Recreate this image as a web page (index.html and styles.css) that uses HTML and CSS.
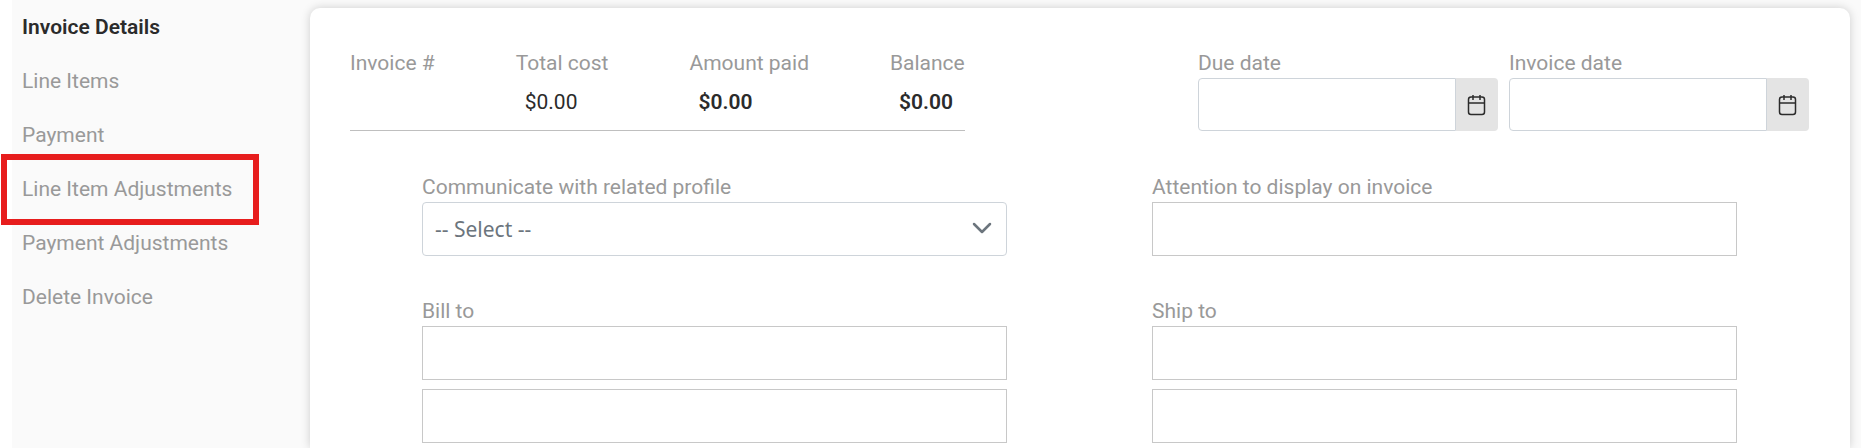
FILE: index.html
```html
<!DOCTYPE html>
<html lang="en">
  <head>
    <meta charset="utf-8">
    <title>Invoice Details</title>
    <link rel="stylesheet" href="styles.css">
  </head>
  <body>
    <div class="page">
      <nav class="sidebar">
        <a href="#details" class="active">Invoice Details</a>
        <a href="#items">Line Items</a>
        <a href="#payment">Payment</a>
        <a href="#item-adjustments" class="marked">Line Item Adjustments</a>
        <a href="#payment-adjustments">Payment Adjustments</a>
        <a href="#delete">Delete Invoice</a>
      </nav>

      <main class="card">
        <div class="summary">
          <dl class="totals">
            <div>
              <dt>Invoice #</dt>
              <dd></dd>
            </div>
            <div>
              <dt>Total cost</dt>
              <dd>$0.00</dd>
            </div>
            <div>
              <dt>Amount paid</dt>
              <dd class="strong">$0.00</dd>
            </div>
            <div>
              <dt>Balance</dt>
              <dd class="strong">$0.00</dd>
            </div>
          </dl>

          <div class="dates">
            <div class="field">
              <label for="due-date">Due date</label>
              <div class="date-input">
                <input type="text" id="due-date">
                <button type="button" aria-label="Choose due date">
                  <svg class="calendar" viewBox="0 0 20 22">
                    <rect x="1.500" y="3" width="16" height="17.500" rx="2.500" />
                    <path d="M1.500 9h16M6 1v5M13 1v5" />
                  </svg>
                </button>
              </div>
            </div>
            <div class="field">
              <label for="invoice-date">Invoice date</label>
              <div class="date-input">
                <input type="text" id="invoice-date">
                <button type="button" aria-label="Choose invoice date">
                  <svg class="calendar" viewBox="0 0 20 22">
                    <rect x="1.500" y="3" width="16" height="17.500" rx="2.500" />
                    <path d="M1.500 9h16M6 1v5M13 1v5" />
                  </svg>
                </button>
              </div>
            </div>
          </div>
        </div>

        <form class="details">
          <div class="field">
            <label for="profile">Communicate with related profile</label>
            <div class="select-box">
              <select id="profile">
                <option>-- Select --</option>
              </select>
              <svg class="arrow" viewBox="0 0 20 12">
                <path d="M2 2l8 8 8-8" />
              </svg>
            </div>
          </div>
          <div class="field">
            <label for="attention">Attention to display on invoice</label>
            <input type="text" id="attention">
          </div>
          <div class="field">
            <label for="bill-to">Bill to</label>
            <input type="text" id="bill-to">
            <input type="text" aria-label="Bill to, line 2">
          </div>
          <div class="field">
            <label for="ship-to">Ship to</label>
            <input type="text" id="ship-to">
            <input type="text" aria-label="Ship to, line 2">
          </div>
        </form>
      </main>
    </div>
  </body>
</html>
```
FILE: styles.css
```css
* {
  box-sizing: border-box;
}

body {
  margin: 0;
  padding-left: 12px;
  background-color: #fff;
  color: #2b2b2b;
  font-family: Roboto, Arial, sans-serif;
  font-size: 21px;
  line-height: 24px;
}

.page {
  display: flex;
  min-height: 100vh;
  padding: 8px 11px 0 0;
  background-color: #fafafa;
}

/* Sidebar */
.sidebar {
  display: flex;
  flex-direction: column;
  align-items: flex-start;
  gap: 30px;
  width: 298px;
  flex-shrink: 0;
  padding: 7px 0 0 10px;
}

.sidebar a {
  color: #999;
  text-decoration: none;
}

.sidebar .active {
  color: #2b2b2b;
  font-weight: 600;
}

.marked {
  position: relative;
}

.marked::after {
  content: "";
  position: absolute;
  top: -23px;
  right: -27px;
  bottom: -24px;
  left: -21px;
  border: 6px solid #e71d1d;
}

/* Card */
.card {
  flex: 1;
  min-width: 0;
  padding: 43px 41px 5px 40px;
  border-radius: 10px 10px 0 0;
  background-color: #fff;
  box-shadow: 0 0 10px rgba(0, 0, 0, 0.18);
}

.summary {
  display: flex;
  justify-content: space-between;
}

.totals {
  display: flex;
  gap: 81px;
  margin: 0;
  border-bottom: 1px solid #bfbfbf;
}

.totals dt {
  color: #999;
}

.totals dd {
  margin: 15px 0 0 9px;
}

.totals .strong {
  font-weight: 600;
}

.dates {
  display: flex;
  gap: 11px;
}

.field label {
  display: block;
  margin-bottom: 3px;
  color: #999;
}

input,
select {
  display: block;
  width: 100%;
  height: 54px;
  padding: 0 12px;
  border: 1px solid #c8c8c8;
  border-radius: 0;
  background-color: #fff;
  color: #2b2b2b;
  font: inherit;
}

.date-input {
  display: flex;
  width: 300px;
}

.date-input input {
  flex: 1;
  min-width: 0;
  height: 53px;
  border-color: #ced4da;
  border-radius: 4px 0 0 4px;
}

.date-input button {
  display: flex;
  align-items: center;
  justify-content: center;
  width: 42px;
  padding: 0;
  border: none;
  border-radius: 0 4px 4px 0;
  background-color: #e4e4e4;
}

.calendar {
  width: 20px;
  height: 22px;
  fill: none;
  stroke: #2b2b2b;
  stroke-width: 1.5;
}

/* Details form */
.details {
  display: grid;
  grid-template-columns: 1fr 1fr;
  gap: 43px 145px;
  padding: 44px 72px 0;
}

.field input + input {
  margin-top: 9px;
}

.select-box {
  position: relative;
}

select {
  appearance: none;
  border-color: #ced4da;
  border-radius: 4px;
  color: #6c757d;
  font-family: "Noto Sans", "Open Sans", sans-serif;
}

.arrow {
  position: absolute;
  top: 20px;
  right: 15px;
  width: 20px;
  height: 12px;
  fill: none;
  stroke: #6c757d;
  stroke-width: 2.5;
  stroke-linecap: round;
  stroke-linejoin: round;
  pointer-events: none;
}
```
